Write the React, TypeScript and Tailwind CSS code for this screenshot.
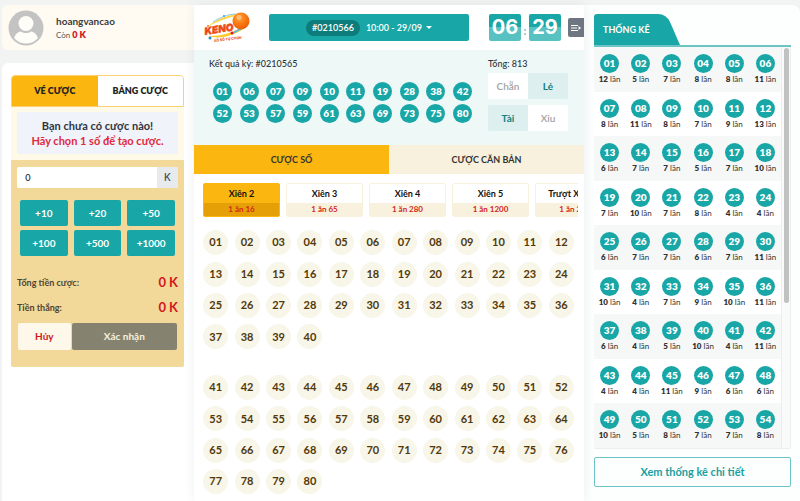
import { useState } from 'react'

const RESULTS = [1, 6, 7, 9, 10, 11, 19, 28, 38, 42, 52, 53, 57, 59, 61, 63, 69, 73, 75, 80]

const COUNTS = [
  12, 5, 7, 8, 8, 11, 8, 11, 8, 7, 9, 13, 6, 7, 7, 5, 7, 10, 7, 10, 7, 8, 4, 4, 6, 7, 7, 6, 7, 11,
  10, 4, 7, 9, 10, 11, 6, 4, 5, 10, 4, 11, 4, 4, 11, 9, 6, 6, 10, 5, 8, 7, 7, 8,
]

const BET_TYPES = [
  { name: 'Xiên 2', odds: '1 ăn 16' },
  { name: 'Xiên 3', odds: '1 ăn 65' },
  { name: 'Xiên 4', odds: '1 ăn 280' },
  { name: 'Xiên 5', odds: '1 ăn 1200' },
  { name: 'Trượt Xiên 4', odds: '1 ăn 2.3' },
]

const AMOUNTS = [10, 20, 50, 100, 500, 1000]

const pad = (n: number) => String(n).padStart(2, '0')
const range = (from: number, to: number) => Array.from({ length: to - from + 1 }, (_, i) => from + i)

function Ball({ n }: { n: number }) {
  return (
    <span className="flex size-[19px] items-center justify-center rounded-full bg-[#18a7a6] text-[10px] font-extrabold text-white">
      {pad(n)}
    </span>
  )
}

function Logo() {
  return (
    <svg viewBox="0 0 48 34" className="h-[34px] w-12 shrink-0" role="img" aria-label="Keno">
      <defs>
        <radialGradient id="ball" cx="0.4" cy="0.3" r="0.75">
          <stop offset="0" stopColor="#ffa544" />
          <stop offset="0.5" stopColor="#fb7a12" />
          <stop offset="1" stopColor="#e85a06" />
        </radialGradient>
      </defs>
      <path d="M3 16C12 8 22 5 32 3L33 5C22 7 12 11 3 16Z" fill="#ffd84a" />
      <path d="M9 11C15 7 24 3 32 3" fill="none" stroke="#8cc9ee" strokeWidth="1" />
      <path d="M4 25C16 29 32 24 42 16L40 14C30 22 17 25 4 25Z" fill="#ffc928" />
      <path d="M29 22L42 15" stroke="#58b9e7" strokeWidth="1.5" />
      <circle cx="37" cy="10" r="8.5" fill="url(#ball)" />
      <circle cx="35" cy="6.5" r="2.5" fill="#ffbd73" />
      <circle cx="6" cy="27" r="1.5" fill="#1c8ee0" />
      <circle cx="28" cy="22" r="1.5" fill="#d92332" />
      <circle cx="20" cy="5" r="1" fill="#4a9ae6" />
      <circle cx="4" cy="15" r="1" fill="#f27b21" />
      <text
        x="1"
        y="24"
        transform="rotate(-9 1 24)"
        fontFamily="Inter, sans-serif"
        fontSize="10"
        fontWeight="900"
        fontStyle="italic"
        fill="#ee4a16"
        stroke="#ee4a16"
        strokeWidth="0.4"
      >
        KENO
      </text>
      <text
        x="10"
        y="31"
        transform="rotate(-7 10 31)"
        fontFamily="Inter, sans-serif"
        fontSize="3.5"
        fontWeight="800"
        fill="#ee4a16"
      >
        XỔ SỐ TỰ CHỌN
      </text>
    </svg>
  )
}

function UserCard() {
  return (
    <div className="ml-0.5 flex h-[45px] items-center rounded-l-md bg-[#fffbf3] pl-1.5">
      <svg viewBox="0 0 36 36" className="size-9" aria-hidden="true">
        <defs>
          <clipPath id="avatar">
            <circle cx="18" cy="18" r="15.5" />
          </clipPath>
        </defs>
        <circle cx="18" cy="18" r="17.5" fill="#c3c3c3" />
        <g clipPath="url(#avatar)" fill="#fffdf8">
          <path d="M5 35C5 25 10 21.500 13 21.500C16 23.500 20 23.500 23 21.500C26 21.500 31 25 31 35Z" />
          <circle cx="18" cy="13.500" r="8.500" fill="#c3c3c3" />
          <circle cx="18" cy="13.500" r="7.500" />
        </g>
      </svg>
      <div className="ml-3">
        <p className="text-[10px] leading-[14px] font-bold text-[#3c3c3c]">hoangvancao</p>
        <p className="text-[8px] leading-[13px] text-[#555]">
          Còn <b className="text-[9px] font-extrabold text-[#d1171c]">0 K</b>
        </p>
      </div>
    </div>
  )
}

function BetSlip() {
  const [amount, setAmount] = useState(0)

  return (
    <section className="mt-[13px] ml-0.5 flex-1 rounded-tl-md bg-white pt-3 pr-2.5 pl-[9px]">
      <div className="grid h-8 grid-cols-2 overflow-hidden rounded-t border border-[#fcd070] text-[9px] font-extrabold text-[#222]">
        <button type="button" className="bg-[#fbb60f]">VÉ CƯỢC</button>
        <button type="button" className="bg-white">BẢNG CƯỢC</button>
      </div>
      <div className="bg-[#fff9e8] px-1.5 pt-[5px] pb-1.5">
        <div className="rounded-xs bg-[#f0f3f9] py-1.5 text-center text-[11px] leading-[15px] font-bold">
          <p className="text-[#2f3440]">Bạn chưa có cược nào!</p>
          <p className="text-[#e0293d]">Hãy chọn 1 số để tạo cược.</p>
        </div>
      </div>
      <div className="rounded-b-xs bg-[#f3d999] px-1.5 pt-[7px] pb-[17px]">
        <div className="flex h-[21px] overflow-hidden rounded-xs bg-white font-[Inter,sans-serif]">
          <input
            type="text"
            aria-label="Tiền cược"
            value={amount}
            onChange={(e) => setAmount(Number(e.target.value) || 0)}
            className="min-w-0 flex-1 pl-2 text-[9px] font-medium text-[#333] focus:outline-none"
          />
          <span className="flex w-[21px] items-center justify-center bg-[#e8ebee] text-[10px] font-medium text-[#495057]">K</span>
        </div>
        <div className="mt-3 grid grid-cols-3 gap-x-1.5 gap-y-1 px-[3px]">
          {AMOUNTS.map((a) => (
            <button
              key={a}
              type="button"
              onClick={() => setAmount(amount + a)}
              className="h-[26px] rounded-xs bg-[#18a7a6] text-[10px] font-bold text-white"
            >
              +{a}
            </button>
          ))}
        </div>
        <dl className="mt-[14px] text-[9px] font-bold text-[#4c4537]">
          <div className="flex h-[25px] items-center justify-between">
            <dt>Tổng tiền cược:</dt>
            <dd className="text-[13px] font-bold text-[#d1171c]">0 K</dd>
          </div>
          <div className="flex h-[25px] items-center justify-between">
            <dt>Tiền thắng:</dt>
            <dd className="text-[13px] font-bold text-[#d1171c]">0 K</dd>
          </div>
        </dl>
        <div className="mt-[3px] grid grid-cols-[1fr_2fr] gap-px px-px text-[10px] font-bold">
          <button type="button" className="h-[27px] rounded-xs bg-[#fdf8ea] text-[#d1171c]">Hủy</button>
          <button type="button" className="h-[27px] rounded-xs bg-[#858370] text-[#f7f0dc]">Xác nhận</button>
        </div>
      </div>
    </section>
  )
}

function TimeBox({ value }: { value: string }) {
  return (
    <span className="flex h-[27px] w-8 items-center justify-center rounded-xs bg-linear-to-b from-[#18a7a6] from-50% to-[#57c2c1] to-50% font-[Inter,sans-serif] text-[20px] leading-[27px] font-bold text-white">
      {value}
    </span>
  )
}

function Header() {
  return (
    <header className="flex h-[45px] items-center bg-white pl-2.5">
      <Logo />
      <button
        type="button"
        className="ml-[17px] flex h-[27px] flex-1 items-center justify-center rounded-xs bg-[#18a7a6] text-[9px] font-semibold text-white"
      >
        <span className="mr-1.5 rounded-full bg-[#0f7c7c] px-1.5 py-px leading-[14px]">#0210566</span>
        10:00 - 29/09
        <span className="ml-1 border-x-3 border-t-3 border-x-transparent border-t-white" />
      </button>
      <div className="ml-5 flex items-center" role="timer">
        <TimeBox value="06" />
        <span className="flex h-4 w-2 items-end justify-center text-[11px] leading-[11px] font-bold text-[#57c2c1]">:</span>
        <TimeBox value="29" />
      </div>
      <button
        type="button"
        aria-label="Menu"
        className="ml-[7px] flex h-[19px] w-4 items-center justify-center rounded-l-xs bg-[#6e7681]"
      >
        <svg viewBox="0 0 12 10" className="h-2.5 w-3 shrink-0" aria-hidden="true">
          <path d="M1 2.500H8M1 5H7M1 7.500H8" stroke="#fff" strokeWidth="1.2" />
          <path d="M8.500 3L11 5L8.500 7Z" fill="#fff" />
        </svg>
      </button>
    </header>
  )
}

function Pair({ labels, active }: { labels: [string, string]; active: number }) {
  return (
    <div className="grid h-[26px] grid-cols-2 overflow-hidden rounded-xs text-[10px]">
      {labels.map((label, i) => (
        <span
          key={label}
          className={
            i === active
              ? 'flex items-center justify-center bg-[#ddf0ef] font-bold text-[#12807f]'
              : 'flex items-center justify-center bg-white font-semibold text-[#a3a3a3]'
          }
        >
          {label}
        </span>
      ))}
    </div>
  )
}

function NumberGrid({ from, to }: { from: number; to: number }) {
  return (
    <div className="grid grid-cols-12">
      {range(from, to).map((n) => (
        <div key={n} className="flex aspect-square items-center justify-center">
          <button type="button" className="size-[25px] rounded-full bg-[#f8f5e9] text-[11px] font-bold text-[#50390a]">
            {pad(n)}
          </button>
        </div>
      ))}
    </div>
  )
}

function Game() {
  const [type, setType] = useState(0)

  return (
    <main className="z-10 flex min-w-0 flex-col bg-white shadow-[0_0_10px_rgba(0,60,60,0.08)]">
      <Header />
      <section className="flex h-[95px] justify-between bg-[#eef8f7] pt-[7px] pr-4 pl-[15px] text-[#2f3438]">
        <div>
          <h2 className="text-[9px] leading-[13px] font-medium">Kết quả kỳ: #0210565</h2>
          <div className="mt-3 grid w-[267px] grid-cols-10 gap-y-[3px]">
            {RESULTS.map((n) => (
              <div key={n} className="flex justify-center">
                <Ball n={n} />
              </div>
            ))}
          </div>
        </div>
        <div className="w-20">
          <p className="mb-[3px] text-[9px] leading-[13px] font-medium">Tổng: 813</p>
          <div className="flex flex-col gap-1.5">
            <Pair labels={['Chẵn', 'Lẻ']} active={1} />
            <Pair labels={['Tài', 'Xỉu']} active={0} />
          </div>
        </div>
      </section>
      <div className="grid h-[29px] grid-cols-2 text-[9px] font-bold text-[#333]">
        <button type="button" className="bg-[#fbb60f]">CƯỢC SỐ</button>
        <button type="button" className="bg-[#f8f1dd]">CƯỢC CĂN BẢN</button>
      </div>
      <div className="mt-[9px] mr-1.5 ml-[9px] flex gap-1.5 overflow-hidden">
        {BET_TYPES.map((t, i) => (
          <button
            key={t.name}
            type="button"
            onClick={() => setType(i)}
            className={
              i === type
                ? 'w-[77px] shrink-0 overflow-hidden rounded-xs border border-[#fbb60f] bg-[#fbb60f]'
                : 'w-[77px] shrink-0 overflow-hidden rounded-xs border border-[#f8f1dd] bg-white'
            }
          >
            <span className="block text-[9px] leading-[19px] font-bold text-[#111]">{t.name}</span>
            <span
              className={
                i === type
                  ? 'block bg-[#e5a008] text-[8px] leading-[13px] font-bold text-[#d4261c]'
                  : 'block bg-[#f8f1dd] text-[8px] leading-[13px] font-bold text-[#d4261c]'
              }
            >
              {t.odds}
            </span>
          </button>
        ))}
      </div>
      <div className="mt-2.5 mr-[7px] ml-1.5 flex flex-col gap-[19px]">
        <NumberGrid from={1} to={40} />
        <NumberGrid from={41} to={80} />
      </div>
    </main>
  )
}

function Stats() {
  return (
    <aside className="flex-1 rounded-tr-lg bg-[#fdfefe] pt-[9px] pr-[9px] pl-2.5">
      <div className="border-b-2 border-[#6cc5c4]">
        <h2 className="relative flex h-[31px] w-[86px] items-center pl-[9px] text-[9px] font-bold text-white">
          <svg viewBox="0 0 86 31" className="absolute inset-0 size-full" aria-hidden="true">
            <path d="M0 31V3Q0 0 3 0H64Q72 0 76 8L86 31Z" fill="#18a7a6" />
          </svg>
          <span className="relative">THỐNG KÊ</span>
        </h2>
      </div>
      <div className="flex h-[402px] overflow-hidden rounded-b-xs border-b border-[#eceeee]">
        <div className="grid flex-1 grid-cols-6 grid-rows-9">
          {COUNTS.map((count, i) => (
            <div
              key={i}
              className={
                Math.floor(i / 6) % 2 === 0
                  ? 'flex flex-col items-center bg-[#f5f8f7] pt-[7px]'
                  : 'flex flex-col items-center bg-white pt-[7px]'
              }
            >
              <Ball n={i + 1} />
              <p className="text-[8px] leading-[13px] text-[#333]">
                <b className="font-extrabold">{count}</b> lần
              </p>
            </div>
          ))}
        </div>
        <div className="flex w-2.5 justify-center border-x border-[#eceeee] bg-[#fafafa] pt-px">
          <div className="h-[255px] w-[5px] rounded-full bg-[#c1c1c1]" />
        </div>
      </div>
      <button
        type="button"
        className="mt-2 h-[30px] w-full rounded-xs border border-[#6cc5c4] text-[11px] font-bold text-[#18a09f]"
      >
        Xem thống kê chi tiết
      </button>
    </aside>
  )
}

export default function App() {
  return (
    <div className="grid min-h-screen grid-cols-[194px_minmax(0,1fr)_216px] bg-[#f2f4f3] pt-[5px] font-['Lato','Noto_Sans',sans-serif]">
      <div className="flex flex-col">
        <UserCard />
        <BetSlip />
      </div>
      <Game />
      <div className="flex flex-col">
        <Stats />
      </div>
    </div>
  )
}
